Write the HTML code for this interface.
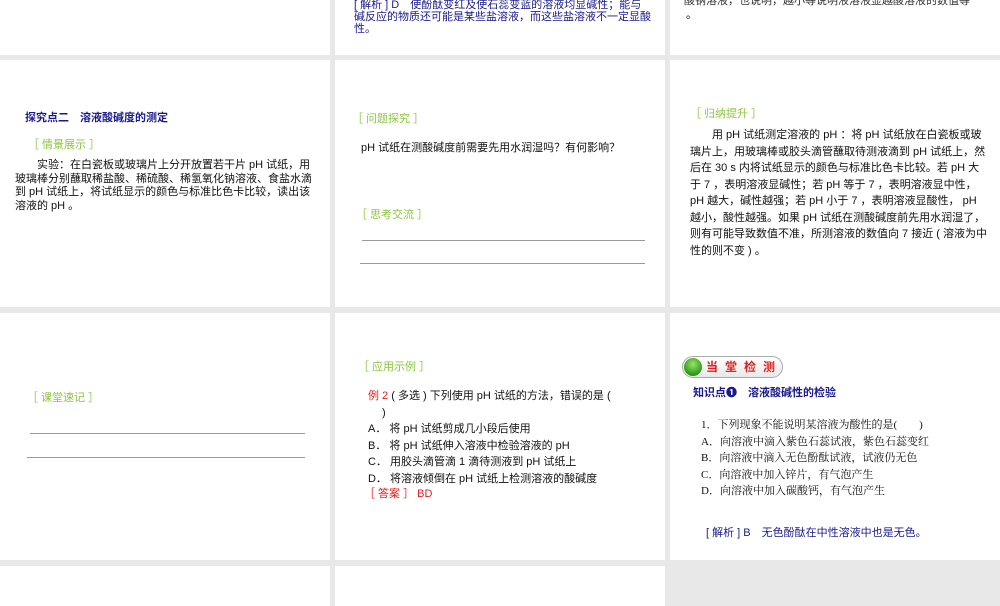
<!DOCTYPE html>
<html><head><meta charset="utf-8"><style>
*{margin:0;padding:0;box-sizing:border-box}
body{width:1000px;height:600px;background:#e8e8e8;position:relative;overflow:hidden;font-family:"Liberation Sans","Noto Sans CJK SC",sans-serif;font-size:11px;color:#111}
.p{position:absolute;background:#fff;overflow:hidden}
.t{position:absolute;white-space:nowrap;line-height:12px}
.g{color:#8cc63f}
.n{color:#1a1a8c}
.b{font-weight:bold}
.ln{position:absolute;height:1px;background:#999}
.r{color:#e02020}
</style></head><body>
<div class="p" style="left:0;top:0;width:330px;height:55px"></div>
<div class="p" style="left:335px;top:0;width:330px;height:55px">
<div class="t n" style="left:19px;top:-1px;line-height:12px">[ 解析 ] D　使酚酞变红及使石蕊变蓝的溶液均显碱性；能与<br>碱反应的物质还可能是某些盐溶液，而这些盐溶液不一定显酸<br>性。</div></div>
<div class="p" style="left:670px;top:0;width:330px;height:55px">
<div class="t" style="left:14px;top:-5px;color:#333">酸钠溶液，也说明，越小等说明液溶液显越酸溶液的数值等</div>
<div class="t" style="left:16px;top:9px">。</div></div>

<div class="p" style="left:0;top:60px;width:330px;height:247px">
<div class="t n b" style="left:25px;top:52px">探究点二　溶液酸碱度的测定</div>
<div class="t g" style="left:28px;top:79px">［ 情景展示 ］</div>
<div class="t" style="left:15px;top:99px;line-height:13.5px;white-space:normal;width:298px">　　实验：在白瓷板或玻璃片上分开放置若干片 pH 试纸，用玻璃棒分别蘸取稀盐酸、稀硫酸、稀氢氧化钠溶液、食盐水滴到 pH 试纸上，将试纸显示的颜色与标准比色卡比较，读出该溶液的 pH 。</div></div>

<div class="p" style="left:335px;top:60px;width:330px;height:247px">
<div class="t g" style="left:17px;top:53px">［ 问题探究 ］</div>
<div class="t" style="left:26px;top:82px">pH 试纸在测酸碱度前需要先用水润湿吗？有何影响？</div>
<div class="t g" style="left:21px;top:149px">［ 思考交流 ］</div>
<div class="ln" style="left:27px;top:180px;width:283px"></div>
<div class="ln" style="left:25px;top:203px;width:285px"></div></div>

<div class="p" style="left:670px;top:60px;width:330px;height:247px">
<div class="t g" style="left:20px;top:48px">［ 归纳提升 ］</div>
<div class="t" style="left:20px;top:67px;line-height:16.5px;white-space:normal;width:300px">　　用 pH 试纸测定溶液的 pH ：将 pH 试纸放在白瓷板或玻璃片上，用玻璃棒或胶头滴管蘸取待测液滴到 pH 试纸上，然后在 30 s 内将试纸显示的颜色与标准比色卡比较。若 pH 大于 7 ，表明溶液显碱性；若 pH 等于 7 ，表明溶液显中性，pH 越大，碱性越强；若 pH 小于 7 ，表明溶液显酸性， pH 越小，酸性越强。如果 pH 试纸在测酸碱度前先用水润湿了，则有可能导致数值不准，所测溶液的数值向 7 接近 ( 溶液为中性的则不变 ) 。</div></div>

<div class="p" style="left:0;top:313px;width:330px;height:247px">
<div class="t g" style="left:27px;top:79px">［ 课堂速记 ］</div>
<div class="ln" style="left:30px;top:120px;width:275px"></div>
<div class="ln" style="left:27px;top:144px;width:278px"></div></div>

<div class="p" style="left:335px;top:313px;width:330px;height:247px">
<div class="t g" style="left:23px;top:48px">［ 应用示例 ］</div>
<div class="t" style="left:33px;top:75px;line-height:16.5px"><span class="r">例 2</span> ( 多选 ) 下列使用 pH 试纸的方法，错误的是 (<br>　 )<br>A． 将 pH 试纸剪成几小段后使用<br>B． 将 pH 试纸伸入溶液中检验溶液的 pH<br>C． 用胶头滴管滴 1 滴待测液到 pH 试纸上<br>D． 将溶液倾倒在 pH 试纸上检测溶液的酸碱度</div>
<div class="t r" style="left:29px;top:175px">［ 答案 ］ BD</div></div>

<div class="p" style="left:670px;top:313px;width:330px;height:247px">
<div style="position:absolute;left:12px;top:43px;width:101px;height:22px;border:1px solid #aaa;border-radius:11px;background:linear-gradient(#fff,#e8e8e8)"></div>
<div style="position:absolute;left:14px;top:45px;width:18px;height:18px;border-radius:50%;background:radial-gradient(circle at 50% 35%,#9be36a,#2a9a18 70%,#1a6a10)"></div>
<div class="t b r" style="left:36px;top:47px;font-size:12px;letter-spacing:7px;line-height:14px;font-family:'Noto Sans CJK SC',sans-serif">当堂检测</div>
<div class="t n b" style="left:23px;top:74px">知识点❶　溶液酸碱性的检验</div>
<div class="t" style="left:31px;top:104px;line-height:16.6px;font-family:'Liberation Serif','Noto Serif CJK SC',serif">1．下列现象不能说明某溶液为酸性的是(　　)<br>A．向溶液中滴入紫色石蕊试液，紫色石蕊变红<br>B．向溶液中滴入无色酚酞试液，试液仍无色<br>C．向溶液中加入锌片，有气泡产生<br>D．向溶液中加入碳酸钙，有气泡产生</div>
<div class="t n" style="left:36px;top:214px">[ 解析 ] B　无色酚酞在中性溶液中也是无色。</div></div>

<div class="p" style="left:0;top:566px;width:330px;height:40px"></div>
<div class="p" style="left:335px;top:566px;width:330px;height:40px"></div>
</body></html>
